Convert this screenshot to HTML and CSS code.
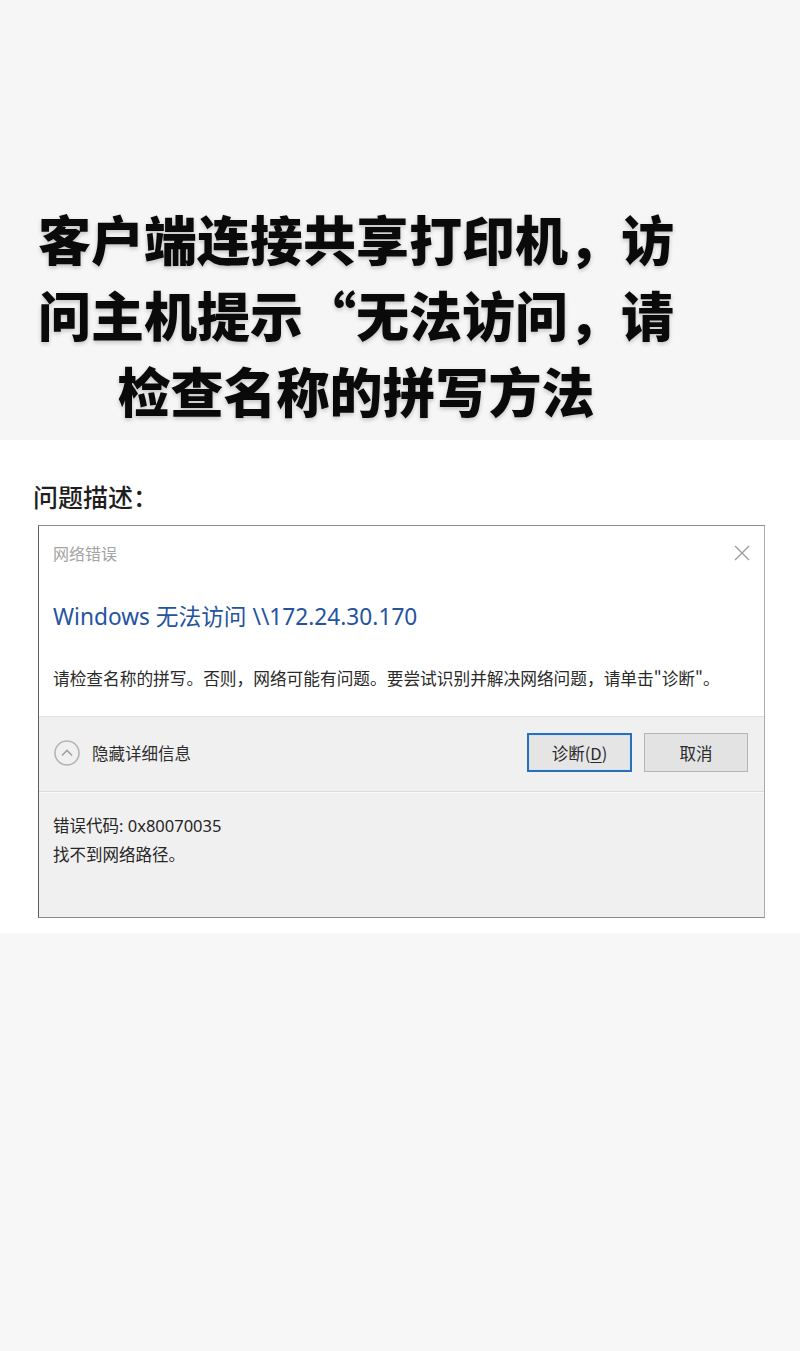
FILE: index.html
```html
<!DOCTYPE html>
<html lang="zh-CN">
<head>
<meta charset="utf-8">
<title>客户端连接共享打印机</title>
<link rel="stylesheet" href="styles.css">
</head>
<body>
<header class="hero">
  <h1 class="title">客户端连接共享打印机，访<br>问主机提示“无法访问，请<br>检查名称的拼写方法</h1>
</header>
<section class="content">
  <div class="label">问题描述：</div>
  <div class="dialog">
    <div class="dlg-top">
      <div class="dlg-titlebar">
        <span class="dlg-title">网络错误</span>
        <svg class="close" width="16" height="16" viewBox="0 0 16 16"><path d="M1 1L15 15M15 1L1 15" stroke="#9a9a9a" stroke-width="1.3" fill="none"/></svg>
      </div>
      <div class="dlg-heading">Windows 无法访问 \\172.24.30.170</div>
      <div class="dlg-text">请检查名称的拼写。否则，网络可能有问题。要尝试识别并解决网络问题，请单击"诊断"。</div>
    </div>
    <div class="dlg-bottom">
      <div class="actions">
        <div class="toggle">
          <svg class="chev" width="28" height="28" viewBox="0 0 28 28"><circle cx="14" cy="14" r="12" stroke="#b4b4b4" stroke-width="1.6" fill="none"/><path d="M9 16.5L14 11.5L19 16.5" stroke="#a0a0a0" stroke-width="1.6" fill="none"/></svg>
          <span>隐藏详细信息</span>
        </div>
        <div class="buttons">
          <div class="btn btn-primary">诊断(<u>D</u>)</div>
          <div class="btn">取消</div>
        </div>
      </div>
      <div class="details">
        <div>错误代码: 0x80070035</div>
        <div>找不到网络路径。</div>
      </div>
    </div>
  </div>
</section>
</body>
</html>
```
FILE: styles.css
```css
html, body {
  margin: 0;
  padding: 0;
}
body {
  background: #f7f7f7;
  font-family: "Noto Sans", "Noto Sans CJK SC", sans-serif;
  min-height: 1351px;
}
.hero {
  height: 440px;
  background: #f6f6f6;
  box-sizing: border-box;
  padding-top: 200px;
}
.title {
  margin: 0 0 0 38px;
  width: 636px;
  text-align: center;
  white-space: nowrap;
  font-family: "Noto Sans CJK SC", sans-serif;
  font-weight: 900;
  font-size: 53px;
  line-height: 76px;
  color: #0a0a0a;
  text-shadow: 0 2px 4px rgba(0, 0, 0, 0.22);
}
.content {
  background: #ffffff;
  height: 493px;
  box-sizing: border-box;
  padding: 41px 0 0 33px;
}
.label {
  font-family: "Noto Sans CJK SC", sans-serif;
  font-size: 25px;
  font-weight: 500;
  line-height: 30px;
  color: #1e1e1e;
}
.dialog {
  margin: 14px 0 0 5px;
  width: 727px;
  height: 393px;
  box-sizing: border-box;
  border-left: 1.5px solid #5e5e5e;
  border-top: 1.5px solid #8c8c8c;
  border-right: 1.5px solid #ababab;
  border-bottom: 1.5px solid #8a8a8a;
  display: flex;
  flex-direction: column;
  background: #f0f0f0;
}
.dlg-top {
  background: #ffffff;
  height: 191px;
  box-sizing: border-box;
  padding: 17px 0 0 14px;
  border-bottom: 1px solid #e0e0e0;
}
.dlg-titlebar {
  display: flex;
  justify-content: space-between;
  align-items: center;
  height: 20px;
  padding-right: 14px;
}
.dlg-title {
  font-family: "Noto Sans CJK SC", sans-serif;
  font-size: 16px;
  color: #a3a3a3;
  line-height: 20px;
}
.close {
  display: block;
}
.dlg-heading {
  margin-top: 39px;
  font-size: 22.7px;
  line-height: 30px;
  color: #2553a0;
}
.dlg-text {
  margin-top: 35px;
  font-family: "Noto Sans CJK SC", sans-serif;
  font-size: 16.7px;
  line-height: 22px;
  color: #2a2a2a;
  white-space: nowrap;
}
.dlg-bottom {
  flex: 1;
  display: flex;
  flex-direction: column;
}
.actions {
  display: flex;
  justify-content: space-between;
  align-items: center;
  padding: 16px 16px 0 14px;
  height: 39px;
  padding-bottom: 19px;
  border-bottom: 1px solid #dcdcdc;
  box-shadow: 0 1px 0 #fafafa;
}
.toggle {
  display: flex;
  align-items: center;
  gap: 11px;
  font-family: "Noto Sans CJK SC", sans-serif;
  font-size: 16.5px;
  color: #2e2e2e;
}
.chev {
  display: block;
}
.buttons {
  display: flex;
  gap: 12px;
}
.btn {
  width: 104px;
  height: 39px;
  box-sizing: border-box;
  border: 1.5px solid #b4b4b4;
  background: #e3e3e3;
  display: flex;
  align-items: center;
  justify-content: center;
  font-family: "Noto Sans CJK SC", sans-serif;
  font-size: 16.5px;
  color: #2a2a2a;
}
.btn-primary {
  width: 105px;
  border: 2.5px solid #2a6fb8;
  box-shadow: inset 0 0 0 1px #cfe4f7;
  background: #e5e5e5;
}
.btn u {
  text-decoration: underline;
  text-underline-offset: 2px;
}
.details {
  padding: 19px 0 0 14px;
  font-family: "Noto Sans", "Noto Sans CJK SC", sans-serif;
  font-size: 16.5px;
  line-height: 29px;
  color: #262626;
}
```
